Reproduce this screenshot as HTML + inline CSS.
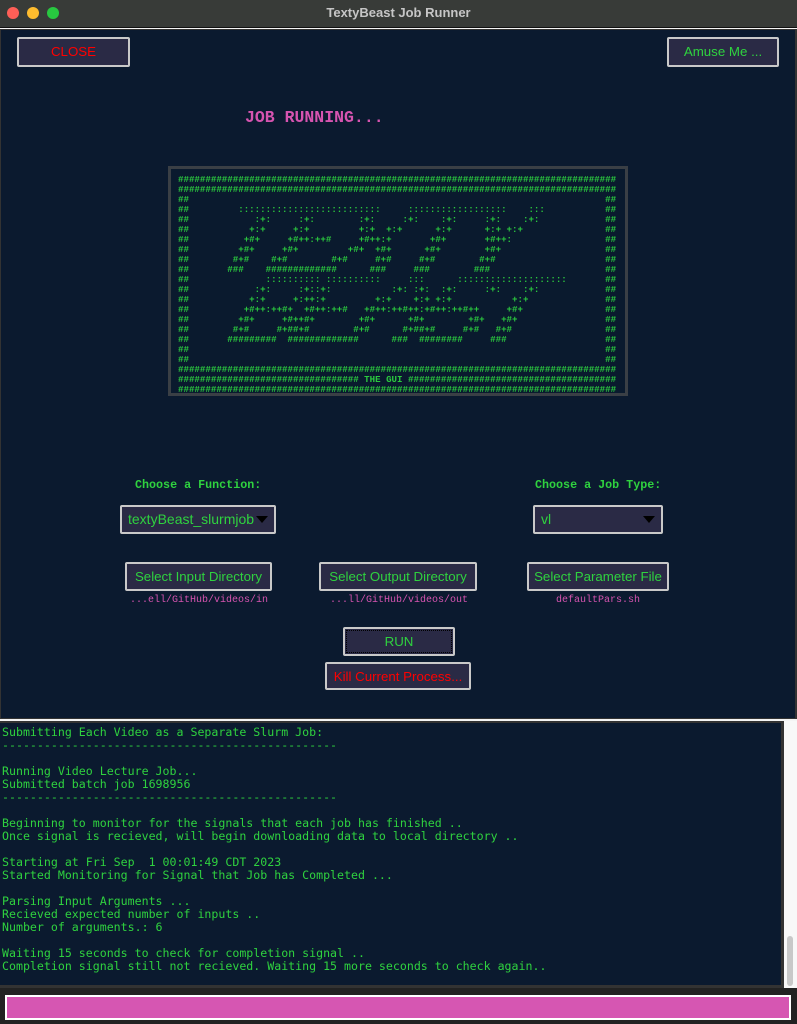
<!DOCTYPE html>
<html><head><meta charset="utf-8"><style>
*{margin:0;padding:0;box-sizing:border-box}
body{width:797px;height:1024px;background:#f4f4f4;position:relative;overflow:hidden;font-family:"Liberation Sans",sans-serif}
.abs{position:absolute}
#title{left:0;top:0;width:797px;height:28px;background:#383b38;border-bottom:1px solid #111}
#title .t{position:absolute;left:0;right:0;top:5px;text-align:center;color:#c6c6c6;font-weight:bold;font-size:13px}
.dot{position:absolute;top:7px;width:12px;height:12px;border-radius:50%}
#main{left:0;top:29px;width:797px;height:690px;background:#0b1a2f;border:1px solid #333;border-right:2px solid #333}
.btn{position:absolute;background:#2a2a45;border:2px solid #c9c9c9;border-radius:2px;color:#2fd23f;font-size:13.3px;text-align:center;line-height:25px}
.lbl{position:absolute;font-family:"Liberation Mono",monospace;font-weight:bold;color:#2fd23f;font-size:11.7px}
.path{position:absolute;font-family:"Liberation Mono",monospace;color:#d654b0;font-size:10px}
.tri{position:absolute;width:0;height:0;border-left:6px solid transparent;border-right:6px solid transparent;border-top:7px solid #000}
#art{left:168px;top:166px;width:460px;height:230px;border:3px solid #3a3f45;background:#0a1a2e}
#art pre{position:absolute;left:7px;top:6px;font-family:"Liberation Mono",monospace;font-size:9.15px;line-height:10px;color:#2bc93f;font-weight:bold;white-space:pre}
#con{left:0;top:721px;width:784px;height:267px;background:#0b1a2f;border-top:2px solid #333;border-right:3px solid #333;border-bottom:3px solid #333}
#con pre{position:absolute;left:2px;top:3px;font-family:"DejaVu Sans Mono",monospace;font-size:11.6px;line-height:13px;color:#2fd23f;white-space:pre}
#sb{left:784px;top:721px;width:13px;height:267px;background:#f8f8f8}
#thumb{left:787px;top:936px;width:6px;height:50px;background:#c8c8c8;border-radius:3px}
#bot{left:0;top:988px;width:797px;height:36px;background:#222}
#bar{left:5px;top:995px;width:786px;height:25px;background:#d656b2;border:2px solid #fff}
</style></head><body>
<div id="title" class="abs"><div class="dot" style="left:7px;background:#fe5f57"></div><div class="dot" style="left:27px;background:#febc2e"></div><div class="dot" style="left:47px;background:#28c840"></div><div class="t">TextyBeast Job Runner</div></div>
<div id="main" class="abs"></div>
<div class="btn" style="left:17px;top:37px;width:113px;height:30px;color:#f00">CLOSE</div>
<div class="btn" style="left:667px;top:37px;width:112px;height:30px">Amuse Me ...</div>
<div class="abs" style="left:245px;top:108px;font-family:'Liberation Mono',monospace;font-weight:bold;font-size:16.5px;color:#d654b0">JOB RUNNING...</div>
<div id="art" class="abs"><pre>################################################################################
################################################################################
##                                                                            ##
##         ::::::::::::::::::::::::::     ::::::::::::::::::    :::           ##
##            :+:     :+:        :+:     :+:    :+:     :+:    :+:            ##
##           +:+     +:+         +:+  +:+      +:+      +:+ +:+               ##
##          +#+     +#++:++#     +#++:+       +#+       +#++:                 ##
##         +#+     +#+         +#+  +#+      +#+        +#+                   ##
##        #+#    #+#        #+#     #+#     #+#        #+#                    ##
##       ###    #############      ###     ###        ###                     ##
##              :::::::::: ::::::::::     :::      ::::::::::::::::::::       ##
##            :+:     :+::+:           :+: :+:  :+:     :+:    :+:            ##
##           +:+     +:++:+         +:+    +:+ +:+           +:+              ##
##          +#++:++#+  +#++:++#   +#++:++#++:+#++:++#++     +#+               ##
##         +#+     +#++#+        +#+      +#+        +#+   +#+                ##
##        #+#     #+##+#        #+#      #+##+#     #+#   #+#                 ##
##       #########  #############      ###  ########     ###                  ##
##                                                                            ##
##                                                                            ##
################################################################################
################################# THE GUI ######################################
################################################################################</pre></div>
<div class="lbl" style="left:135px;top:478px">Choose a Function:</div>
<div class="lbl" style="left:535px;top:478px">Choose a Job Type:</div>
<div class="btn" style="left:120px;top:505px;width:156px;height:29px;text-align:left;padding-left:6px;line-height:25px;font-size:14px">textyBeast_slurmjob</div>
<div class="tri" style="left:256px;top:516px"></div>
<div class="btn" style="left:533px;top:505px;width:130px;height:29px;text-align:left;padding-left:6px;line-height:25px;font-size:14px">vl</div>
<div class="tri" style="left:643px;top:516px"></div>
<div class="btn" style="left:125px;top:562px;width:147px;height:29px">Select Input Directory</div>
<div class="btn" style="left:319px;top:562px;width:158px;height:29px">Select Output Directory</div>
<div class="btn" style="left:527px;top:562px;width:142px;height:29px">Select Parameter File</div>
<div class="path" style="left:130px;top:595px">...ell/GitHub/videos/in</div>
<div class="path" style="left:330px;top:595px">...ll/GitHub/videos/out</div>
<div class="path" style="left:556px;top:595px">defaultPars.sh</div>
<div class="btn" style="left:343px;top:627px;width:112px;height:29px;outline:1px dotted #000;outline-offset:-4px">RUN</div>
<div class="btn" style="left:325px;top:662px;width:146px;height:28px;color:#f00">Kill Current Process...</div>
<div id="con" class="abs"><pre>Submitting Each Video as a Separate Slurm Job:
------------------------------------------------

Running Video Lecture Job...
Submitted batch job 1698956
------------------------------------------------

Beginning to monitor for the signals that each job has finished ..
Once signal is recieved, will begin downloading data to local directory ..

Starting at Fri Sep  1 00:01:49 CDT 2023
Started Monitoring for Signal that Job has Completed ...

Parsing Input Arguments ...
Recieved expected number of inputs ..
Number of arguments.: 6

Waiting 15 seconds to check for completion signal ..
Completion signal still not recieved. Waiting 15 more seconds to check again..</pre></div>
<div id="sb" class="abs"></div><div id="thumb" class="abs"></div>
<div id="bot" class="abs"></div><div id="bar" class="abs"></div>
</body></html>
